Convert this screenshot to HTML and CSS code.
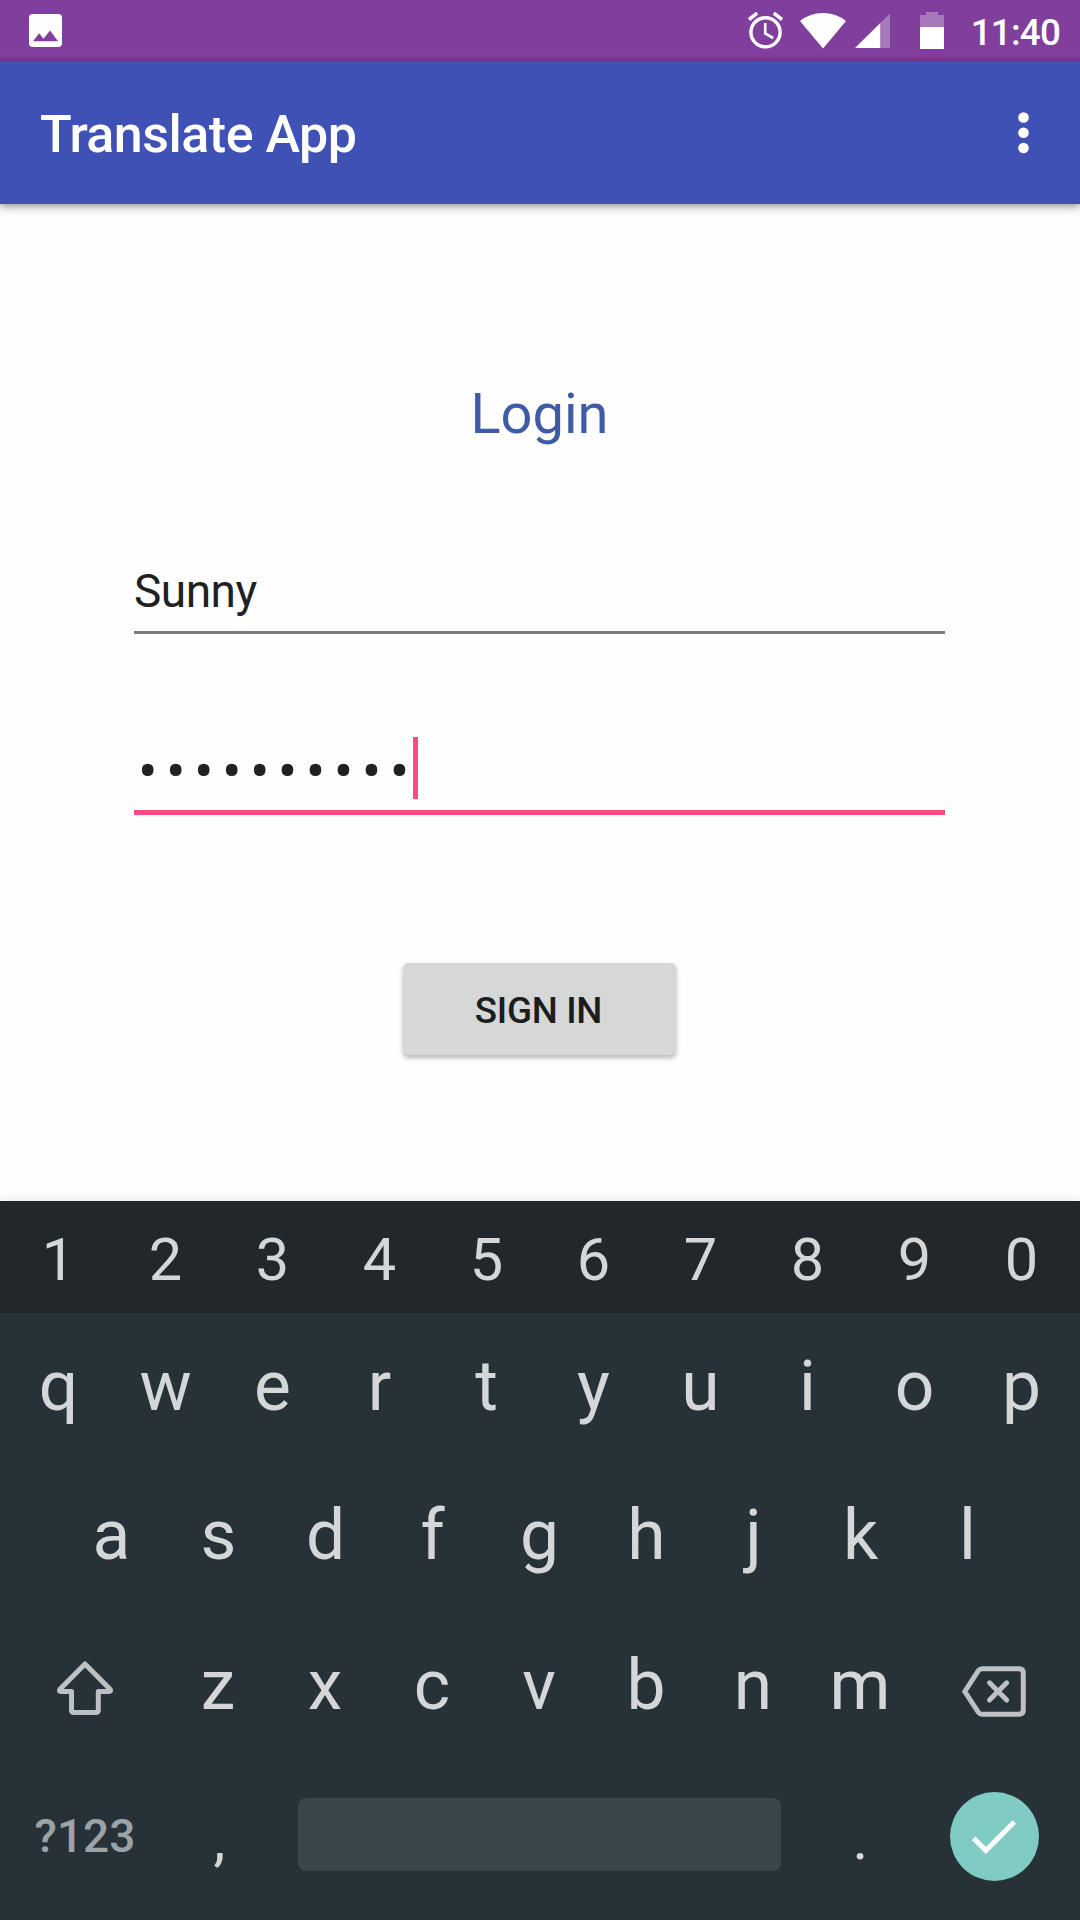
FILE: index.html
```html
<!DOCTYPE html>
<html lang="en">
<head>
<meta charset="utf-8">
<title>Translate App</title>
<link rel="stylesheet" href="styles.css">
</head>
<body>
<header class="status-bar">
  <svg class="icon-photo" viewBox="0 0 33 33"><path fill="#fff" fill-rule="evenodd" d="M3.7 0H29.3A3.7 3.7 0 0 1 33 3.7V29.3A3.7 3.7 0 0 1 29.3 33H3.7A3.7 3.7 0 0 1 0 29.3V3.7A3.7 3.7 0 0 1 3.7 0ZM4 27.3H29L21 16.5 14.5 24.7 10.2 19.3Z"/></svg>
  <div class="status-icons">
    <svg class="icon-alarm" viewBox="0 0 35 37"><g fill="none" stroke="#fff"><circle cx="17.5" cy="20.3" r="14.6" stroke-width="3.4"/><path stroke-width="3.6" d="M1 7.6 9.2 1.1M34 7.6 25.8 1.1"/><path stroke-width="2.6" d="M17.2 11V21.5L25.2 26"/></g></svg>
    <svg class="icon-wifi" viewBox="0 0 46 36"><path fill="#fff" d="M0 8Q10 0 23 0T46 8L23 35.5Z"/></svg>
    <svg class="icon-signal" viewBox="0 0 36 36"><path fill="#fff" fill-opacity=".3" d="M36 0V35.5H26V10Z"/><path fill="#fff" d="M26 9.8V35.5H0Z"/></svg>
    <svg class="icon-battery" viewBox="0 0 24 37"><path fill="#fff" fill-opacity=".3" d="M6 0H18V3H24V15H0V3H6Z"/><path fill="#fff" d="M0 15H24V37H0Z"/></svg>
    <span class="clock">11:40</span>
  </div>
</header>
<div class="app-bar">
  <h1 class="app-title">Translate App</h1>
  <svg class="icon-more" viewBox="0 0 11 42"><g fill="#fff"><circle cx="5.5" cy="5.5" r="5.3"/><circle cx="5.5" cy="20.8" r="5.3"/><circle cx="5.5" cy="36" r="5.3"/></g></svg>
</div>
<main class="login">
  <h2 class="login-title">Login</h2>
  <div class="field">Sunny</div>
  <div class="field field-active"><span class="dots">••••••••••</span><span class="cursor"></span></div>
  <button class="sign-in">SIGN IN</button>
</main>
<section class="keyboard">
  <div class="row row-digits"><span>1</span><span>2</span><span>3</span><span>4</span><span>5</span><span>6</span><span>7</span><span>8</span><span>9</span><span>0</span></div>
  <div class="row row-top"><span>q</span><span>w</span><span>e</span><span>r</span><span>t</span><span>y</span><span>u</span><span>i</span><span>o</span><span>p</span></div>
  <div class="row row-home"><span>a</span><span>s</span><span>d</span><span>f</span><span>g</span><span>h</span><span>j</span><span>k</span><span>l</span></div>
  <div class="row row-lower">
    <span class="key-wide"><svg class="icon-shift" viewBox="0 0 58 56"><path fill="none" stroke="#bec1c4" stroke-width="5" stroke-linejoin="round" d="M29 4 54.3 29.5Q55.5 31.5 53 31.5H42.3V50Q42.3 52.5 39.8 52.5H18Q15.500 52.500 15.500 50V31.500H5Q2.500 31.500 3.700 29.500Z"/></svg></span>
    <span>z</span><span>x</span><span>c</span><span>v</span><span>b</span><span>n</span><span>m</span>
    <span class="key-wide"><svg class="icon-delete" viewBox="0 0 64 51"><g fill="none" stroke="#bec1c4" stroke-width="5"><path d="M2.800 25.500 16.500 4.500Q18 2.800 20 2.800H57Q61.300 2.800 61.300 7V44Q61.300 48.300 57 48.300H20Q18 48.300 16.500 46.500Z"/><path stroke-linecap="round" d="M27.500 16.800 44.700 34M44.700 16.800 27.500 34"/></g></svg></span>
  </div>
  <div class="row row-bottom">
    <span class="key-wide key-symbols">?123</span>
    <span class="key-punct">,</span>
    <span class="key-space"></span>
    <span class="key-punct key-period">.</span>
    <span class="key-wide"><span class="key-enter"><svg class="icon-check" viewBox="0 0 44 34"><path fill="none" stroke="#fff" stroke-width="5" d="M1.700 18.300 14 30.500 42.300 2"/></svg></span></span>
  </div>
</section>
</body>
</html>
```
FILE: styles.css
```css
* {
  box-sizing: border-box;
}

body {
  margin: 0;
  width: 1080px;
  height: 1920px;
  display: flex;
  flex-direction: column;
  overflow: hidden;
  background: #fefefe;
  font-family: Roboto, sans-serif;
}

svg {
  display: block;
  flex: none;
}

h1, h2 {
  margin: 0;
}

.status-bar {
  flex: none;
  height: 61px;
  padding: 0 20px 0 29px;
  display: flex;
  justify-content: space-between;
  align-items: center;
  background: #813f9d;
}

.icon-photo {
  width: 33px;
  height: 33px;
}

.status-icons {
  display: flex;
  align-items: center;
}

.icon-alarm {
  width: 35px;
  height: 37px;
  margin-right: 17px;
}

.icon-wifi {
  width: 46px;
  height: 36px;
  margin-right: 9px;
}

.icon-signal {
  width: 35px;
  height: 36px;
  margin-right: 30px;
}

.icon-battery {
  width: 24px;
  height: 37px;
  margin-right: 27px;
}

.clock {
  padding-top: 4px;
  color: #fff;
  font-size: 36.750px;
  font-weight: 500;
  line-height: 44px;
  letter-spacing: -0.8px;
}

.app-bar {
  position: relative;
  flex: none;
  height: 143px;
  padding: 0 51px 0 40px;
  display: flex;
  justify-content: space-between;
  align-items: center;
  background: #3f51b5;
  box-shadow: 0 4px 9px rgba(0, 0, 0, .25), 0 0 6px rgba(0, 0, 0, .3);
}

.app-title {
  padding-top: 4px;
  color: #fff;
  font-size: 52px;
  font-weight: 500;
  line-height: 62px;
  letter-spacing: -0.5px;
}

.icon-more {
  width: 11px;
  height: 42px;
}

.login {
  flex: none;
  height: 997px;
  padding: 177px 135px 0 134px;
  display: flex;
  flex-direction: column;
}

.login-title {
  color: #3f5ba4;
  font-size: 56px;
  font-weight: 400;
  line-height: 66px;
  text-align: center;
}

.field {
  height: 74px;
  margin-top: 113px;
  border-bottom: 3px solid #7c7c7c;
  color: #212121;
  font-size: 46px;
  line-height: 62px;
  letter-spacing: -0.5px;
}

.field-active {
  display: flex;
  height: 78px;
  margin-top: 103px;
  border-bottom: 5px solid #ff4a81;
}

.dots {
  width: 279px;
  padding: 3px 0 0 4px;
  white-space: nowrap;
  font-size: 58px;
  letter-spacing: 8.400px;
}

.cursor {
  width: 5px;
  height: 62px;
  background: #ff4a81;
}

.sign-in {
  align-self: center;
  width: 273px;
  height: 92px;
  margin-top: 148px;
  padding: 2px 2px 0 0;
  border: 0;
  border-radius: 5px;
  background: #d6d8d7;
  box-shadow: 0 3px 5px rgba(0, 0, 0, .28);
  color: #1c1d1d;
  font-family: inherit;
  font-size: 36.750px;
  font-weight: 500;
  letter-spacing: -0.3px;
}

.keyboard {
  flex: 1;
  background: #263238;
  box-shadow: 0 0 9px rgba(0, 0, 0, .12);
  color: #d5d6d8;
  font-size: 69.500px;
}

.row {
  height: 150px;
  padding: 0 5px;
  display: flex;
  align-items: center;
  line-height: 82px;
}

.row > span {
  width: 107px;
  text-align: center;
}

.row-digits {
  height: 112px;
  padding-top: 5px;
  background: #22272b;
  font-size: 59.500px;
}

.row-top {
  height: 148px;
}

.row-home {
  padding: 0 59px 0 58px;
}

.row-lower {
  padding: 0 5.500px 0 4.500px;
}

.row > .key-wide {
  width: 160px;
  display: flex;
  justify-content: center;
}

.icon-shift {
  width: 58px;
  height: 56px;
  margin-top: 4px;
}

.icon-delete {
  width: 64px;
  height: 51px;
  margin-top: 10px;
}

.row-bottom {
  height: 147px;
}

.row > .key-symbols {
  padding-top: 3px;
  color: #9ca3a6;
  font-size: 46px;
  font-weight: 500;
}

.row > .key-punct {
  margin-left: 1px;
  padding-top: 8px;
  font-size: 60px;
}

.row > .key-space {
  width: 483px;
  height: 73px;
  margin: 0 24px 0 25px;
  border-radius: 8px;
  background: #3b464c;
}

.row > .key-period {
  margin-left: 2px;
}

.key-enter {
  width: 89px;
  height: 89px;
  margin-top: 4px;
  display: flex;
  align-items: center;
  justify-content: center;
  border-radius: 50%;
  background: #80cbc4;
}

.icon-check {
  width: 44px;
  height: 34px;
}
```
